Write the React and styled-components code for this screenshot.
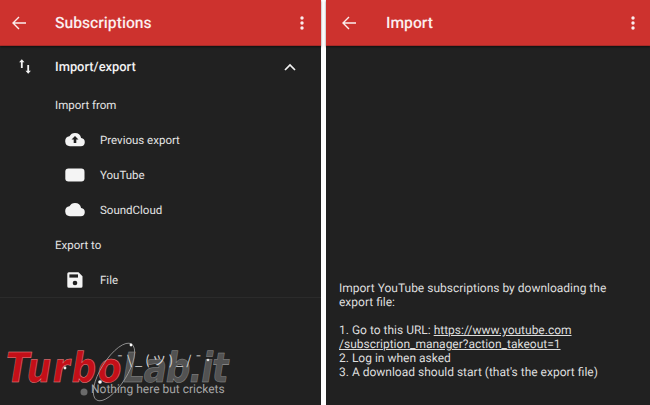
import React from 'react';
import styled, { createGlobalStyle } from 'styled-components';

const GlobalStyle = createGlobalStyle`
  html, body { margin: 0; padding: 0; background: #fff; }
  body {
    font-family: Roboto, "Liberation Sans", sans-serif;
    text-rendering: geometricPrecision;
  }
`;

const Page = styled.div`
  width: 650px;
  height: 405px;
  display: flex;
  justify-content: space-between;
  overflow: hidden;
  position: relative;
`;

const Screen = styled.section`
  width: ${(p) => p.$width}px;
  height: 405px;
  background: #212121;
  display: flex;
  flex-direction: column;
`;

const Toolbar = styled.header`
  height: 46px;
  flex: none;
  background: #cd322e;
  border-bottom: 1px solid #a82a27;
  box-sizing: border-box;
  box-shadow: 0 1px 2px rgba(0, 0, 0, 0.5);
  display: flex;
  align-items: center;
  color: #fff;
`;

const BackSlot = styled.div`
  width: ${(p) => p.$width}px;
  flex: none;
  display: flex;
  padding-left: ${(p) => p.$left}px;
  box-sizing: border-box;
`;

const Title = styled.h1`
  margin: 0;
  flex: 1;
  font-size: 15.7px;
  font-weight: 500;
  color: #fbeeee;
`;

const MoreSlot = styled.div`
  width: ${(p) => p.$width}px;
  flex: none;
  display: flex;
  justify-content: center;
`;

const Row = styled.div`
  height: 35px;
  display: flex;
  align-items: center;
  font-size: 11.5px;
  color: #e4e4e4;
  padding-left: ${(p) => p.$indent || 0}px;
`;

const GroupRow = styled(Row)`
  height: 39px;
  padding-top: 2px;
  font-size: 12.9px;
  font-weight: 500;
  color: #f2f2f2;
`;

const GroupIcon = styled.div`
  width: 50px;
  margin-right: 5px;
  margin-top: -2px;
  flex: none;
  display: flex;
  justify-content: center;
`;

const ItemIcon = styled.div`
  width: 35px;
  flex: none;
  display: flex;
`;

const Label = styled.span`
  flex: 1;
`;

const Chevron = styled.div`
  width: 22px;
  margin-right: 20px;
  margin-top: -2px;
  display: flex;
  justify-content: center;
`;

const SectionList = styled.div`
  border-bottom: 1px solid #2b2b2b;
`;

const Empty = styled.div`
  flex: 1;
  position: relative;
`;

const CricketText = styled.span`
  position: absolute;
  left: 91px;
  top: 84px;
  font-size: 12px;
  color: #a6a6a6;
  z-index: 3;
`;

const Kaomoji = styled.span`
  position: absolute;
  left: 116px;
  top: 52px;
  font-size: 13px;
  letter-spacing: 3px;
  font-family: "Noto Sans CJK JP", Roboto, sans-serif;
  color: #d8d8d8;
  z-index: 3;
  white-space: nowrap;
`;

const Instructions = styled.div`
  flex: 1;
  display: flex;
  flex-direction: column;
  justify-content: flex-end;
  padding: 0 14px 26px 13px;
  font-size: 12px;
  line-height: 14px;
  color: #dedede;
`;

const Spacer = styled.div`
  height: 14px;
`;

const Link = styled.span`
  text-decoration: underline;
`;

const Watermark = styled.div`
  position: absolute;
  left: 6px;
  top: 345px;
  display: flex;
  font-family: "DejaVu Sans", sans-serif;
  font-style: italic;
  font-weight: 700;
  font-size: 40px;
  line-height: 46px;
  transform: scale(0.86, 1.03);
  transform-origin: left top;
  white-space: nowrap;
  pointer-events: none;
  z-index: 1;
`;

const RedPart = styled.span`
  color: #c40f18;
  letter-spacing: 1.9px;
  -webkit-text-stroke: 0.5px #e58a8a;
`;

const GreyPart = styled.span`
  color: rgba(88, 88, 88, 0.92);
  letter-spacing: -1.3px;
  -webkit-text-stroke: 0.5px #8f8f8f;
`;

const Orbit = styled.svg`
  position: absolute;
  left: 55px;
  top: 335px;
  z-index: 2;
  pointer-events: none;
`;

const Back = () => (
  <svg width="14" height="14" viewBox="0 0 14 14" fill="none" stroke="#fbeeee" strokeWidth="1.4">
    <path d="M14 7H1.500M7 1L1 7l6 6" />
  </svg>
);

const More = () => (
  <svg width="4" height="14" viewBox="0 0 4 14" fill="#fbeeee">
    <circle cx="2" cy="2" r="1.7" />
    <circle cx="2" cy="7" r="1.7" />
    <circle cx="2" cy="12" r="1.7" />
  </svg>
);

const SwapIcon = () => (
  <svg width="12" height="15" viewBox="0 0 12 15" fill="#f2f2f2">
    <path d="M2.800 0.200L5.500 3.200H3.700V9H1.900V3.200H0.100zM9.200 14.800L6.500 11.800H8.300V6H10.100V11.800H11.900z" />
  </svg>
);

const ChevronUp = () => (
  <svg width="12" height="8" viewBox="0 0 12 8" fill="none" stroke="#f2f2f2" strokeWidth="1.7">
    <path d="M1 7l5-5 5 5" />
  </svg>
);

const CLOUD = 'M16.100 6.030A6.250 6.250 0 0 0 10 1a6.250 6.250 0 0 0-5.540 3.360A5 5 0 0 0 5 14.300h10.800a4.150 4.150 0 0 0 .3-8.270z';

const UploadCloud = () => (
  <svg width="20" height="16" viewBox="0 0 20 16">
    <path d={CLOUD} fill="#f4f4f4" />
    <path d="M10 4l3.500 3.500h-2.200v3.500h-2.600V7.500H6.500z" fill="#212121" />
  </svg>
);

const YouTubeBox = () => (
  <svg width="20" height="16" viewBox="0 0 20 16">
    <rect x="0.300" y="1.500" width="19.200" height="13" rx="3.200" fill="#f4f4f4" />
  </svg>
);

const Cloud = () => (
  <svg width="20" height="16" viewBox="0 0 20 16">
    <path d={CLOUD} fill="#f4f4f4" />
  </svg>
);

const Save = () => (
  <svg width="20" height="16" viewBox="-2 0 20 16">
    <path d="M1.800 .3h9.700l4 4v9.900a1.500 1.500 0 0 1-1.500 1.500H1.800A1.500 1.500 0 0 1 .3 14.200V1.800A1.500 1.500 0 0 1 1.800 .3z" fill="#f4f4f4" />
    <rect x="2.400" y="2.400" width="8.600" height="3.200" fill="#212121" />
    <circle cx="8" cy="11" r="2.300" fill="#212121" />
  </svg>
);

const OrbitMark = () => (
  <Orbit width="165" height="70" viewBox="0 0 165 70">
    <ellipse cx="59" cy="37" rx="33" ry="13" transform="rotate(-58 59 37)" fill="none" stroke="#9c9c9c" strokeWidth="0.800" />
    <circle cx="76" cy="10" r="1.400" fill="#fff" />
    <circle cx="10" cy="33" r="1.400" fill="#eee" />
    <circle cx="45" cy="47" r="1.800" fill="#fff" />
    <circle cx="153" cy="25" r="1.300" fill="#ddd" />
    <circle cx="29" cy="57" r="3.500" fill="#6a6a6a" />
  </Orbit>
);

const subItems = [
  { label: 'Previous export', icon: <UploadCloud /> },
  { label: 'YouTube', icon: <YouTubeBox /> },
  { label: 'SoundCloud', icon: <Cloud /> },
];

const App = () => (
  <Page>
    <GlobalStyle />
    <Screen $width={321}>
      <Toolbar>
        <BackSlot $width={55} $left={12}><Back /></BackSlot>
        <Title>Subscriptions</Title>
        <MoreSlot $width={38}><More /></MoreSlot>
      </Toolbar>
      <SectionList>
        <GroupRow>
          <GroupIcon><SwapIcon /></GroupIcon>
          <Label>Import/export</Label>
          <Chevron><ChevronUp /></Chevron>
        </GroupRow>
        <Row $indent={55}>Import from</Row>
        {subItems.map((item) => (
          <Row key={item.label} $indent={65}>
            <ItemIcon>{item.icon}</ItemIcon>
            <Label>{item.label}</Label>
          </Row>
        ))}
        <Row $indent={55}>Export to</Row>
        <Row $indent={65}>
          <ItemIcon><Save /></ItemIcon>
          <Label>File</Label>
        </Row>
      </SectionList>
      <Empty>
        <Kaomoji>¯\_(ツ)_/¯</Kaomoji>
        <CricketText>Nothing here but crickets</CricketText>
      </Empty>
    </Screen>
    <Screen $width={324}>
      <Toolbar>
        <BackSlot $width={60} $left={16}><Back /></BackSlot>
        <Title>Import</Title>
        <MoreSlot $width={35}><More /></MoreSlot>
      </Toolbar>
      <Instructions>
        <div>Import YouTube subscriptions by downloading the</div>
        <div>export file:</div>
        <Spacer />
        <div>1. Go to this URL: <Link>https://www.youtube.com</Link></div>
        <div><Link>/subscription_manager?action_takeout=1</Link></div>
        <div>2. Log in when asked</div>
        <div>3. A download should start (that's the export file)</div>
      </Instructions>
    </Screen>
    <Watermark>
      <RedPart>Turbo</RedPart>
      <GreyPart>Lab.it</GreyPart>
    </Watermark>
    <OrbitMark />
  </Page>
);

export default App;
